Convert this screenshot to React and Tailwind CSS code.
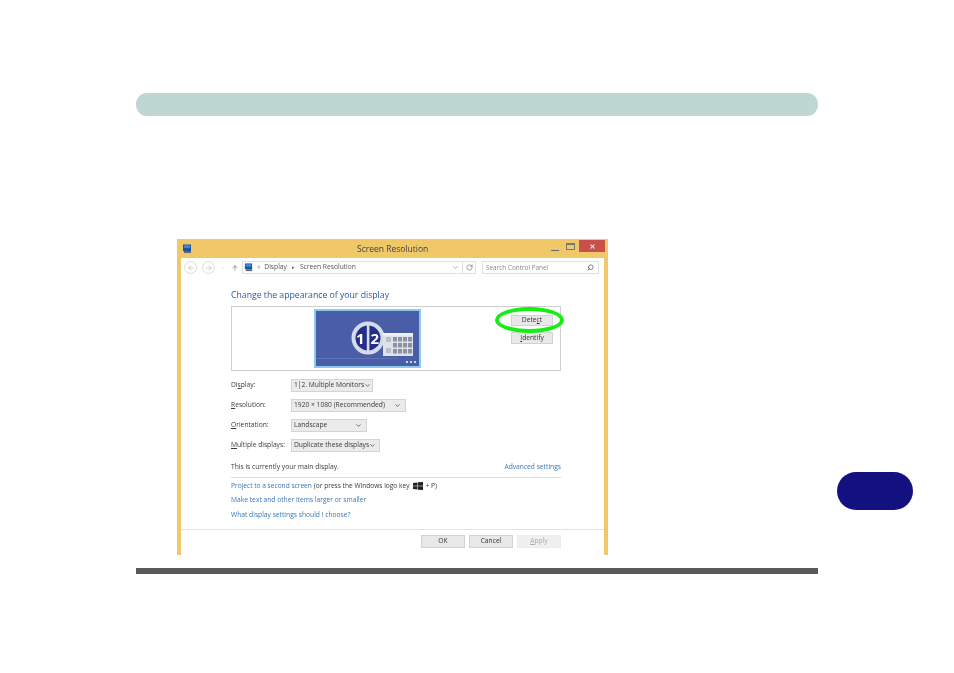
import React from "react";
import { ArrowLeft, ArrowRight, ArrowUp, ChevronDown, RotateCw, Search, X } from "lucide-react";

const sans = "font-['Open_Sans','Noto_Sans',sans-serif]";

function MonitorIcon({ className }) {
  return (
    <svg viewBox="0 0 10 10" className={className}>
      <rect x="1" y="0.5" width="8" height="6.5" fill="#1d4f9c" />
      <rect x="1.8" y="1.2" width="6.4" height="3" fill="#3f86d4" />
      <rect x="2" y="7" width="7" height="2" fill="#5c6770" />
    </svg>
  );
}

function Select({ width, children }) {
  return (
    <div className={`${width} h-[13px] flex items-center justify-between pl-[2px] pr-[4px] bg-[#ebebeb] border border-[#d4d4d4] text-[6.7px] text-[#3a3a3a] whitespace-nowrap`}>
      <span>{children}</span>
      <ChevronDown className="w-[7px] h-[7px] text-[#444] shrink-0" strokeWidth={2.5} />
    </div>
  );
}

function Row({ u, rest, width, value, before = "" }) {
  return (
    <div className="flex items-center h-[13px] text-[6.7px] text-[#3a3a3a]">
      <div className="w-[60px] whitespace-nowrap">
        {before}<span className="underline">{u}</span>{rest}
      </div>
      <Select width={width}>{value}</Select>
    </div>
  );
}

function Button({ children, className }) {
  return (
    <div className={`flex items-center justify-center border text-[6.7px] ${className}`}>
      {children}
    </div>
  );
}

function Monitor() {
  return (
    <div className="relative w-[107px] h-[59px] border-2 border-[#8cc8ef] bg-[#4a5ea8]">
      <svg viewBox="0 0 103 55" className="w-full h-full">
        <circle cx="52" cy="27" r="14.5" fill="#232d8a" stroke="#d5dbe9" strokeWidth="4" />
        <rect x="50.8" y="11" width="2.6" height="32" fill="#d5dbe9" />
        <text x="40" y="33" fontSize="15" fontWeight="700" fill="#fff" fontFamily="Open Sans">1</text>
        <text x="54.5" y="33" fontSize="15" fontWeight="700" fill="#fff" fontFamily="Open Sans">2</text>
        <rect x="67" y="22" width="30" height="23" fill="#dfe2e8" />
        <rect x="67" y="22" width="30" height="2.5" fill="#f2f3f5" />
        {[0, 1, 2].map((r) =>
          [0, 1, 2, 3].map((c) => (
            <rect key={`${r}${c}`} x={77 + c * 5} y={26 + r * 6} width="4" height="4.5" fill="#8d93a3" />
          ))
        )}
        <rect x="70" y="26" width="5" height="5" fill="#b9bdc8" />
        <rect x="70" y="37" width="5" height="5" fill="#b9bdc8" />
        <rect x="0" y="47" width="82" height="0.6" fill="#6d80bf" />
        <circle cx="91" cy="51" r="1" fill="#fff" />
        <circle cx="95" cy="51" r="1" fill="#fff" />
        <circle cx="99" cy="51" r="1" fill="#fff" />
      </svg>
    </div>
  );
}

export default function App() {
  return (
    <div className={`relative w-[954px] h-[673px] bg-white overflow-hidden pt-[93px] ${sans}`}>
      <div className="mx-[136px] h-[23px] rounded-[11px] bg-[#bfd7d3]" />

      <div className="ml-[177px] mt-[123px] w-[431px] h-[316px] bg-[#f0c869] flex flex-col blur-[0.3px]">
        <div className="relative h-[19px] shrink-0 flex items-center pl-[5px]">
          <MonitorIcon className="w-[10px] h-[10px]" />
          <div className="absolute left-[180px] top-[3px] text-[8.5px] leading-[13px] text-[#444] whitespace-nowrap">Screen Resolution</div>
          <div className="flex items-center h-[12px] self-start ml-auto mr-[3px] mt-[1px]">
            <div className="w-[8px] h-[1px] bg-[#666] mt-[8px] mr-[7px]" />
            <div className="w-[9px] h-[7px] border border-[#777] border-t-2 mr-[4px]" />
            <div className="w-[26px] h-[12px] bg-[#c9504a] flex items-center justify-center">
              <X className="w-[7px] h-[7px] text-white" strokeWidth={3.5} />
            </div>
          </div>
        </div>

        <div className="flex-1 mx-[4px] bg-white flex flex-col min-h-0">
          <div className="h-[19px] shrink-0 flex items-center pl-[3px] pr-[5px] text-[6.7px] text-[#555]">
            <div className="w-[13px] h-[13px] rounded-full border border-[#ddd] flex items-center justify-center mr-[5px]">
              <ArrowLeft className="w-[8px] h-[8px] text-[#bbb]" strokeWidth={2} />
            </div>
            <div className="w-[13px] h-[13px] rounded-full border border-[#ddd] flex items-center justify-center">
              <ArrowRight className="w-[8px] h-[8px] text-[#bbb]" strokeWidth={2} />
            </div>
            <ChevronDown className="w-[6px] h-[6px] text-[#ccc] mx-[5px]" />
            <ArrowUp className="w-[8px] h-[8px] text-[#777] mr-[3px]" strokeWidth={2} />
            <div className="w-[221px] h-[13px] border border-[#e0e0e0] flex items-center pl-[1px] pr-[3px]">
              <MonitorIcon className="w-[9px] h-[9px]" />
              <span className="ml-[4px] mr-[4px] text-[#888]">«</span>
              <span>Display</span>
              <span className="mx-[5px] text-[5px]">▸</span>
              <span>Screen Resolution</span>
              <ChevronDown className="w-[7px] h-[7px] ml-auto text-[#777]" />
            </div>
            <div className="w-[13px] h-[13px] border border-l-0 border-[#e0e0e0] flex items-center justify-center">
              <RotateCw className="w-[7px] h-[7px] text-[#666]" strokeWidth={2} />
            </div>
            <div className="w-[117px] h-[13px] ml-[6px] border border-[#e0e0e0] flex items-center justify-between pl-[3px] pr-[4px] text-[6.4px] text-[#888]">
              <span>Search Control Panel</span>
              <Search className="w-[7px] h-[7px] text-[#555] -scale-x-100" strokeWidth={2.5} />
            </div>
          </div>

          <div className="flex-1 pl-[50px] pr-[43px] pt-[12px] flex flex-col min-h-0">
            <h1 className="text-[8.7px] leading-[13px] text-[#2a5a9e] font-normal whitespace-nowrap">Change the appearance of your display</h1>

            <div className="relative mt-[4px] h-[65px] border border-[#cfcfcf] flex pt-[2px] pl-[82px]">
              <Monitor />
              <div className="ml-auto mr-[7px] pt-[6px] flex flex-col gap-[6px]">
                <Button className="w-[42px] h-[11px] bg-[#e8e8e8] border-[#d2d2d2] text-[#333]">Dete<span className="underline">c</span>t</Button>
                <Button className="w-[42px] h-[12px] bg-[#e8e8e8] border-[#d2d2d2] text-[#333]"><span className="underline">I</span>dentify</Button>
              </div>
              <div className="absolute left-[263px] top-[0px] w-[69px] h-[26px] rounded-[50%] border-[4px] border-[#14ee14]" />
            </div>

            <div className="mt-[8px] flex flex-col gap-[7px]">
              <Row before="Di" u="s" rest="play:" width="w-[82px]" value="1|2. Multiple Monitors" />
              <Row u="R" rest="esolution:" width="w-[115px]" value="1920 × 1080 (Recommended)" />
              <Row u="O" rest="rientation:" width="w-[76px]" value="Landscape" />
              <Row u="M" rest="ultiple displays:" width="w-[89px]" value="Duplicate these displays" />
            </div>

            <div className="mt-[9px] h-[12px] flex items-center justify-between text-[6.7px] text-[#3a3a3a]">
              <span>This is currently your main display.</span>
              <span className="text-[#3b78b5]">Advanced settings</span>
            </div>
            <div className="mt-[4px] border-t border-[#dcdcdc]" />
            <div className="mt-[0.5px] text-[6.7px] leading-[14.5px] text-[#3b78b5] whitespace-nowrap">
              <div className="flex items-center text-[6.6px]">
                <span>Project to a second screen</span>
                <span className="text-[#3a3a3a] ml-[2px]">(or press the Windows logo key</span>
                <svg viewBox="0 0 10 8" className="w-[10px] h-[8px] mx-[3px]">
                  <path d="M0 1 L4.5 0.4 V3.7 H0 Z M5 0.3 L10 0 V3.7 H5 Z M0 4.3 H4.5 V7.6 L0 7 Z M5 4.3 H10 V8 L5 7.7 Z" fill="#222" />
                </svg>
                <span className="text-[#3a3a3a]">+ P)</span>
              </div>
              <div>Make text and other items larger or smaller</div>
              <div>What display settings should I choose?</div>
            </div>
          </div>

          <div className="h-[26px] shrink-0 border-t border-[#e2e2e2] flex justify-end gap-[4px] pt-[5px] pr-[43px]">
            <Button className="w-[44px] h-[13px] bg-[#e8e8e8] border-[#d2d2d2] text-[#333]">OK</Button>
            <Button className="w-[44px] h-[13px] bg-[#e8e8e8] border-[#d2d2d2] text-[#333]">Cancel</Button>
            <Button className="w-[44px] h-[13px] bg-[#f0f0f0] border-[#ececec] text-[#aaa]"><span className="underline">A</span>pply</Button>
          </div>
        </div>
      </div>

      <div className="mx-[136px] mt-[13px] h-[6px] bg-[#5a5a5a]" />

      <div className="absolute left-[837px] top-[472px] w-[76px] h-[38px] rounded-[19px] bg-[#131180]" />
    </div>
  );
}
